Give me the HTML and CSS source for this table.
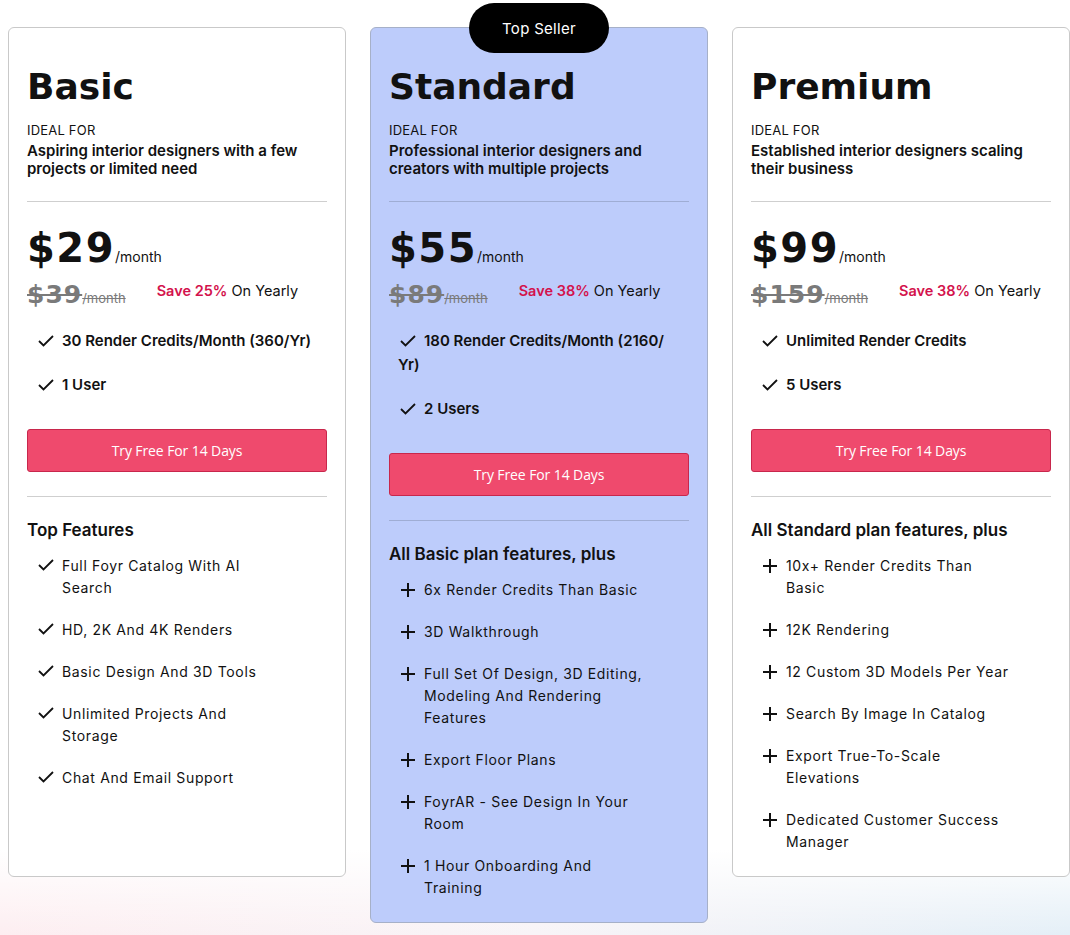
FILE: index.html
```html
<!DOCTYPE html>
<html lang="en">
<head>
<meta charset="utf-8">
<title>Pricing</title>
<link rel="stylesheet" href="styles.css">
</head>
<body>
<main class="plans">
  <section class="card">
    <h2 class="plan-name">Basic</h2>
    <p class="ideal-label">IDEAL FOR</p>
    <p class="ideal-text">Aspiring interior designers with a few projects or limited need</p>
    <hr class="divider">
    <div class="price-row"><span class="price">$29</span><span class="per">/month</span></div>
    <div class="old-row">
      <span class="old"><span class="old-price">$39</span><span class="old-per">/month</span></span>
      <span class="save"><b>Save 25%</b> On Yearly</span>
    </div>
    <ul class="key-list">
      <li><svg class="ico-check" viewBox="0 0 16 12"><polyline points="1,6 5.5,10.5 15,1"/></svg>30 Render Credits/Month (360/Yr)</li>
      <li><svg class="ico-check" viewBox="0 0 16 12"><polyline points="1,6 5.5,10.5 15,1"/></svg>1 User</li>
    </ul>
    <a class="cta" href="#">Try Free For 14 Days</a>
    <hr class="divider divider-low">
    <h3 class="feat-title">Top Features</h3>
    <ul class="feat-list">
      <li><svg class="ico-check" viewBox="0 0 16 12"><polyline points="1,6 5.5,10.5 15,1"/></svg><span>Full Foyr Catalog With AI Search</span></li>
      <li><svg class="ico-check" viewBox="0 0 16 12"><polyline points="1,6 5.5,10.5 15,1"/></svg><span>HD, 2K And 4K Renders</span></li>
      <li><svg class="ico-check" viewBox="0 0 16 12"><polyline points="1,6 5.5,10.5 15,1"/></svg><span>Basic Design And 3D Tools</span></li>
      <li><svg class="ico-check" viewBox="0 0 16 12"><polyline points="1,6 5.5,10.5 15,1"/></svg><span>Unlimited Projects And Storage</span></li>
      <li><svg class="ico-check" viewBox="0 0 16 12"><polyline points="1,6 5.5,10.5 15,1"/></svg><span>Chat And Email Support</span></li>
    </ul>
  </section>

  <section class="card card-featured">
    <div class="badge">Top Seller</div>
    <h2 class="plan-name">Standard</h2>
    <p class="ideal-label">IDEAL FOR</p>
    <p class="ideal-text">Professional interior designers and creators with multiple projects</p>
    <hr class="divider">
    <div class="price-row"><span class="price">$55</span><span class="per">/month</span></div>
    <div class="old-row">
      <span class="old"><span class="old-price">$89</span><span class="old-per">/month</span></span>
      <span class="save"><b>Save 38%</b> On Yearly</span>
    </div>
    <ul class="key-list">
      <li><svg class="ico-check" viewBox="0 0 16 12"><polyline points="1,6 5.5,10.5 15,1"/></svg>180 Render Credits/Month (2160/ Yr)</li>
      <li><svg class="ico-check" viewBox="0 0 16 12"><polyline points="1,6 5.5,10.5 15,1"/></svg>2 Users</li>
    </ul>
    <a class="cta" href="#">Try Free For 14 Days</a>
    <hr class="divider divider-low">
    <h3 class="feat-title">All Basic plan features, plus</h3>
    <ul class="feat-list">
      <li><svg class="ico-plus" viewBox="0 0 14 14"><path d="M7 0V14M0 7H14"/></svg><span>6x Render Credits Than Basic</span></li>
      <li><svg class="ico-plus" viewBox="0 0 14 14"><path d="M7 0V14M0 7H14"/></svg><span>3D Walkthrough</span></li>
      <li><svg class="ico-plus" viewBox="0 0 14 14"><path d="M7 0V14M0 7H14"/></svg><span>Full Set Of Design, 3D Editing, Modeling And Rendering Features</span></li>
      <li><svg class="ico-plus" viewBox="0 0 14 14"><path d="M7 0V14M0 7H14"/></svg><span>Export Floor Plans</span></li>
      <li><svg class="ico-plus" viewBox="0 0 14 14"><path d="M7 0V14M0 7H14"/></svg><span>FoyrAR - See Design In Your Room</span></li>
      <li><svg class="ico-plus" viewBox="0 0 14 14"><path d="M7 0V14M0 7H14"/></svg><span>1 Hour Onboarding And Training</span></li>
    </ul>
  </section>

  <section class="card">
    <h2 class="plan-name">Premium</h2>
    <p class="ideal-label">IDEAL FOR</p>
    <p class="ideal-text">Established interior designers scaling their business</p>
    <hr class="divider">
    <div class="price-row"><span class="price">$99</span><span class="per">/month</span></div>
    <div class="old-row">
      <span class="old"><span class="old-price">$159</span><span class="old-per">/month</span></span>
      <span class="save"><b>Save 38%</b> On Yearly</span>
    </div>
    <ul class="key-list">
      <li><svg class="ico-check" viewBox="0 0 16 12"><polyline points="1,6 5.5,10.5 15,1"/></svg>Unlimited Render Credits</li>
      <li><svg class="ico-check" viewBox="0 0 16 12"><polyline points="1,6 5.5,10.5 15,1"/></svg>5 Users</li>
    </ul>
    <a class="cta" href="#">Try Free For 14 Days</a>
    <hr class="divider divider-low">
    <h3 class="feat-title">All Standard plan features, plus</h3>
    <ul class="feat-list">
      <li><svg class="ico-plus" viewBox="0 0 14 14"><path d="M7 0V14M0 7H14"/></svg><span>10x+ Render Credits Than Basic</span></li>
      <li><svg class="ico-plus" viewBox="0 0 14 14"><path d="M7 0V14M0 7H14"/></svg><span>12K Rendering</span></li>
      <li><svg class="ico-plus" viewBox="0 0 14 14"><path d="M7 0V14M0 7H14"/></svg><span>12 Custom 3D Models Per Year</span></li>
      <li><svg class="ico-plus" viewBox="0 0 14 14"><path d="M7 0V14M0 7H14"/></svg><span>Search By Image In Catalog</span></li>
      <li><svg class="ico-plus" viewBox="0 0 14 14"><path d="M7 0V14M0 7H14"/></svg><span>Export True-To-Scale Elevations</span></li>
      <li><svg class="ico-plus" viewBox="0 0 14 14"><path d="M7 0V14M0 7H14"/></svg><span>Dedicated Customer Success Manager</span></li>
    </ul>
  </section>
</main>
</body>
</html>
```

FILE: styles.css
```css
* { box-sizing: border-box; }

html, body { margin: 0; padding: 0; }

body {
  width: 1070px;
  height: 935px;
  overflow: hidden;
  font-family: "Inter", "Liberation Sans", sans-serif;
  color: #111;
  background:
    linear-gradient(to bottom, #ffffff 0, #ffffff 850px, rgba(255,255,255,0) 935px),
    linear-gradient(to right, #fdeef1 0%, #f8f4f7 50%, #e4eff7 100%);
}

.plans {
  display: grid;
  grid-template-columns: repeat(3, 338px);
  column-gap: 24px;
  align-items: start;
  padding: 27px 0 0 8px;
}

.card {
  position: relative;
  background: #fff;
  border: 1px solid #c9c9c9;
  border-radius: 6px;
  padding: 38px 18px 0 18px;
  min-height: 850px;
}

.card-featured {
  background: #bdccfb;
  border-color: #a6b0c8;
  min-height: 896px;
}

.badge {
  position: absolute;
  top: -25px;
  left: 50%;
  transform: translateX(-50%);
  width: 140px;
  height: 50px;
  border-radius: 25px;
  background: #000;
  color: #fff;
  font-family: "Inter", sans-serif;
  font-size: 15px;
  letter-spacing: 0.3px;
  display: flex;
  align-items: center;
  justify-content: center;
}

.plan-name {
  margin: 0;
  font-family: "DejaVu Sans", sans-serif;
  font-weight: 700;
  font-size: 36px;
  line-height: 42px;
  letter-spacing: 0;
}

.ideal-label {
  margin: 14px 0 0;
  font-size: 13px;
  line-height: 16px;
  letter-spacing: 0.2px;
}

.ideal-text {
  margin: 4px 0 0;
  font-size: 15px;
  font-weight: 600;
  line-height: 18px;
}

.divider {
  border: 0;
  border-top: 1px solid #cfcfcf;
  margin: 23px 0 0;
}

.card-featured .divider { border-top-color: #9fadd4; }

.price-row {
  display: flex;
  align-items: baseline;
  margin-top: 26px;
  height: 40px;
}

.price {
  font-family: "DejaVu Sans", sans-serif;
  font-weight: 700;
  font-size: 40px;
  line-height: 40px;
  letter-spacing: 1.5px;
}

.per {
  font-size: 14px;
  margin-left: 0;
}

.old-row {
  display: flex;
  align-items: flex-start;
  gap: 31px;
  margin-top: 12px;
}

.old {
  color: #7a7a7a;
  text-decoration: line-through;
  display: flex;
  align-items: baseline;
}

.old-price {
  font-family: "DejaVu Sans", sans-serif;
  font-weight: 700;
  font-size: 25px;
  line-height: 30px;
  letter-spacing: 1px;
}

.old-per { font-size: 13px; }

.save {
  font-size: 14.5px;
  line-height: 20px;
  padding-top: 1px;
}

.save b { color: #d3124c; font-weight: 600; }

.key-list {
  list-style: none;
  margin: 19px 0 0;
  padding: 0 10px 0 9px;
}

.key-list li {
  font-size: 15px;
  font-weight: 600;
  line-height: 24px;
  margin-bottom: 20px;
}

.key-list li:last-child { margin-bottom: 0; }

.key-list .ico-check {
  margin: 0 8px 0 2px;
  vertical-align: -1px;
}

.ico-check {
  width: 16px;
  height: 12px;
  flex: none;
  fill: none;
  stroke: #111;
  stroke-width: 1.8;
}

.ico-plus {
  width: 14px;
  height: 14px;
  flex: none;
  fill: none;
  stroke: #111;
  stroke-width: 2;
}

.cta {
  display: flex;
  align-items: center;
  justify-content: center;
  height: 43px;
  margin-top: 32px;
  background: #ef4a6d;
  border: 1px solid #c8274c;
  border-radius: 3px;
  color: #fff;
  text-decoration: none;
  font-family: "Open Sans", sans-serif;
  font-size: 14px;
  letter-spacing: -0.1px;
}

.divider-low { margin-top: 24px; }

.feat-title {
  margin: 22px 0 0;
  font-size: 17px;
  font-weight: 600;
  line-height: 22px;
}

.feat-list {
  list-style: none;
  margin: 14px 0 0;
  padding: 0 0 0 11px;
}

.feat-list li {
  display: flex;
  gap: 8px;
  font-size: 14px;
  line-height: 22px;
  letter-spacing: 0.65px;
  margin-bottom: 20px;
}

.feat-list li span { max-width: 223px; }

.feat-list .ico-check { margin-top: 4px; }
.feat-list .ico-plus { margin-top: 4px; margin-left: 1px; margin-right: 1px; }
```
